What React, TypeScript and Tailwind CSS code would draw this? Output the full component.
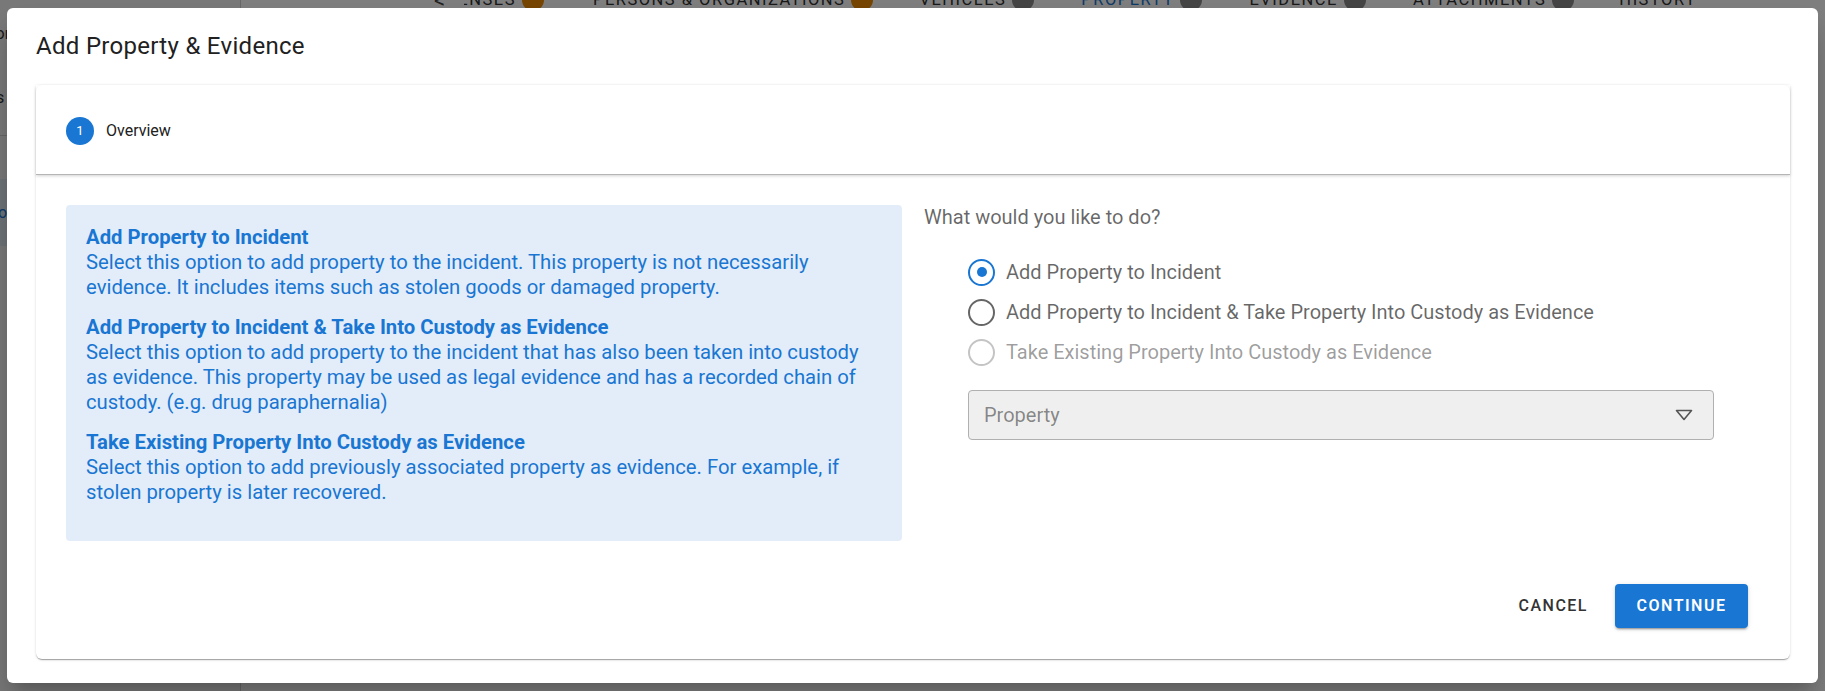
import React from "react";

function Badge({ color }: { color: string }) {
  return <span className={`ml-[6px] inline-block w-[22px] h-[22px] rounded-full shrink-0 ${color}`} />;
}

function Radio({ state }: { state: "on" | "off" | "disabled" }) {
  if (state === "on")
    return (
      <span className="w-[27px] h-[27px] rounded-full border-[2.5px] border-[#1976d2] flex items-center justify-center shrink-0">
        <span className="w-[10px] h-[10px] rounded-full bg-[#1976d2]" />
      </span>
    );
  if (state === "off")
    return <span className="w-[27px] h-[27px] rounded-full border-[2.5px] border-[#666666] shrink-0" />;
  return <span className="w-[27px] h-[27px] rounded-full border-[2.5px] border-[#c4c4c4] shrink-0" />;
}

export default function App() {
  return (
    <div className="relative w-[1825px] h-[691px] overflow-hidden bg-white font-['Roboto',sans-serif]">
      {/* background application */}
      <div className="flex h-full">
        <aside className="w-[241px] h-full bg-[#f2f2f2] border-r border-[#d0d0d0] flex flex-col text-[16px] text-[#333]">
          <div className="h-[20px]" />
          <div className="h-[28px] leading-[28px] -ml-[10px]">for</div>
          <div className="h-[36px]" />
          <div className="h-[28px] leading-[28px] -ml-[4px]">s</div>
          <div className="h-[24px] border-b border-[#cfcfcf]" />
          <div className="h-[43px]" />
          <div className="h-[67px] bg-[#dde7f3] text-[#1976d2] flex items-center -ml-[2px]">oc</div>
        </aside>
        <main className="flex-1 flex flex-col">
          <div className="flex items-center h-[24px] -mt-[12px] pl-[193px] text-[16.5px] tracking-[1.5px] text-[#333] uppercase whitespace-nowrap">
            <span className="text-[22px] text-[#444] w-[30px]">&lt;</span>
            <span className="w-[52px] overflow-hidden flex justify-end">
              <span>Offenses</span>
            </span>
            <Badge color="bg-[#ed8b00]" />
            <span className="ml-[49px]">Persons &amp; Organizations</span>
            <Badge color="bg-[#ed8b00]" />
            <span className="ml-[46px]">Vehicles</span>
            <Badge color="bg-[#8a8a8a]" />
            <span className="ml-[47px] text-[#1976d2]">Property</span>
            <Badge color="bg-[#8a8a8a]" />
            <span className="ml-[47px]">Evidence</span>
            <Badge color="bg-[#8a8a8a]" />
            <span className="ml-[47px]">Attachments</span>
            <Badge color="bg-[#8a8a8a]" />
            <span className="ml-[45px]">History</span>
          </div>
        </main>
      </div>

      {/* overlay */}
      <div className="absolute inset-0 bg-black/50" />

      {/* dialog */}
      <div className="absolute left-[7px] top-[8px] w-[1811px] h-[675px] bg-white rounded-[6px] shadow-[0_11px_15px_-7px_rgba(0,0,0,0.2),0_24px_38px_3px_rgba(0,0,0,0.14)] flex flex-col">
        <div className="pl-[29px] pt-[21px] pb-[22px] text-[24px] leading-[34px] text-[#212121] tracking-[0.3px] font-normal">
          Add Property &amp; Evidence
        </div>

        <div className="ml-[29px] mr-[28px] h-[574px] rounded-[6px] bg-white shadow-[0_2px_1px_-1px_rgba(0,0,0,0.2),0_1px_1px_0_rgba(0,0,0,0.14),0_1px_3px_0_rgba(0,0,0,0.12)] flex flex-col">
          <div className="h-[90px] shrink-0 flex items-center pl-[30px] pt-[2px] border-b border-[#b5b5b5] shadow-[0_1px_3px_rgba(0,0,0,0.18)]">
            <span className="w-[28px] h-[28px] rounded-full bg-[#1976d2] text-white text-[13px] flex items-center justify-center">
              1
            </span>
            <span className="ml-[12px] text-[16px] text-[#212121]">Overview</span>
          </div>

          <div className="flex-1 flex flex-col">
            <div className="flex gap-[22px] pt-[30px] px-[30px]">
              <div className="w-[836px] shrink-0 bg-[#e3edf9] rounded-[4px] pt-[20px] px-[20px] pb-[36px] text-[#1976d2] text-[20.3px] leading-[25px]">
                <div className="font-bold">Add Property to Incident</div>
                <div>
                  Select this option to add property to the incident. This property is not necessarily evidence. It
                  includes items such as stolen goods or damaged property.
                </div>
                <div className="font-bold mt-[15px]">Add Property to Incident &amp; Take Into Custody as Evidence</div>
                <div>
                  Select this option to add property to the incident that has also been taken into custody as
                  evidence. This property may be used as legal evidence and has a recorded chain of custody. (e.g.
                  drug paraphernalia)
                </div>
                <div className="font-bold mt-[15px]">Take Existing Property Into Custody as Evidence</div>
                <div>
                  Select this option to add previously associated property as evidence. For example, if stolen
                  property is later recovered.
                </div>
              </div>

              <div className="flex-1 flex flex-col">
                <div className="text-[20px] leading-[24px] text-black/60">What would you like to do?</div>
                <div className="mt-[23px] pl-[44px] flex flex-col text-[20px]">
                  <label className="h-[40px] flex items-center gap-[11px] text-black/60">
                    <Radio state="on" />
                    <span>Add Property to Incident</span>
                  </label>
                  <label className="h-[40px] flex items-center gap-[11px] text-black/60">
                    <Radio state="off" />
                    <span>Add Property to Incident &amp; Take Property Into Custody as Evidence</span>
                  </label>
                  <label className="h-[40px] flex items-center gap-[11px] text-black/40">
                    <Radio state="disabled" />
                    <span>Take Existing Property Into Custody as Evidence</span>
                  </label>
                </div>
                <div className="mt-[18px] ml-[44px] w-[746px] h-[50px] rounded-[4px] border border-[#b0b0b0] bg-[#efefef] flex items-center justify-between pl-[15px] pr-[20px]">
                  <span className="text-[20px] text-black/45">Property</span>
                  <svg width="18" height="12" viewBox="0 0 18 12" fill="none">
                    <path d="M1.5 1.5 H16.5 L9 10.5 Z" stroke="#555" strokeWidth="1.6" strokeLinejoin="round" />
                  </svg>
                </div>
              </div>
            </div>

            <div className="mt-auto flex justify-end items-center pr-[42px] pb-[31px]">
              <button className="mr-[27px] text-[16px] font-medium tracking-[1.5px] text-[#333]">CANCEL</button>
              <button className="w-[133px] h-[44px] rounded-[4px] bg-[#1976d2] text-white text-[16px] font-semibold tracking-[1.5px] shadow-[0_3px_1px_-2px_rgba(0,0,0,0.2),0_2px_2px_0_rgba(0,0,0,0.14),0_1px_5px_0_rgba(0,0,0,0.12)]">
                CONTINUE
              </button>
            </div>
          </div>
        </div>
      </div>
    </div>
  );
}
